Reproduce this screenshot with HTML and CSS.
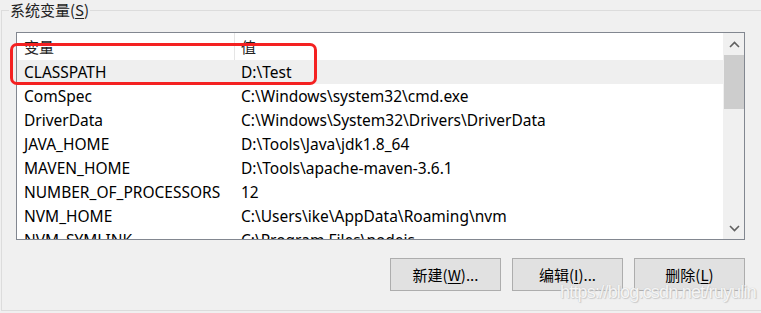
FILE: index.html
```html
<!DOCTYPE html>
<html lang="zh-CN">
<head>
<meta charset="utf-8">
<link rel="stylesheet" href="styles.css">
</head>
<body>
<div class="page">
  <div class="group">
    <div class="legend">系统变量(<u>S</u>)</div>
    <div class="listbox">
      <div class="list">
        <div class="head">
          <div class="hc">变量</div>
          <div class="hc2">值</div>
        </div>
        <div class="row sel"><div class="c1">CLASSPATH</div><div class="c2">D:\Test</div></div>
        <div class="row"><div class="c1">ComSpec</div><div class="c2">C:\Windows\system32\cmd.exe</div></div>
        <div class="row"><div class="c1">DriverData</div><div class="c2">C:\Windows\System32\Drivers\DriverData</div></div>
        <div class="row"><div class="c1">JAVA_HOME</div><div class="c2">D:\Tools\Java\jdk1.8_64</div></div>
        <div class="row"><div class="c1">MAVEN_HOME</div><div class="c2">D:\Tools\apache-maven-3.6.1</div></div>
        <div class="row"><div class="c1">NUMBER_OF_PROCESSORS</div><div class="c2">12</div></div>
        <div class="row"><div class="c1">NVM_HOME</div><div class="c2">C:\Users\ike\AppData\Roaming\nvm</div></div>
        <div class="row"><div class="c1">NVM_SYMLINK</div><div class="c2">C:\Program Files\nodejs</div></div>
      </div>
      <div class="scroll">
        <div class="arrow"><svg width="11" height="7" viewBox="0 0 11 7"><polyline points="1,6 5.5,1.5 10,6" fill="none" stroke="#606060" stroke-width="1.6"/></svg></div>
        <div class="thumb"></div>
        <div class="track"></div>
        <div class="arrow"><svg width="11" height="7" viewBox="0 0 11 7"><polyline points="1,1 5.5,5.5 10,1" fill="none" stroke="#606060" stroke-width="1.6"/></svg></div>
      </div>
    </div>
    <div class="buttons">
      <button class="btn">新建(<u>W</u>)...</button>
      <button class="btn">编辑(<u>I</u>)...</button>
      <button class="btn">删除(<u>L</u>)</button>
    </div>
    <div class="mark"></div>
    <div class="wm">https://blog.csdn.net/ruyulin</div>
  </div>
</div>
</body>
</html>
```
FILE: styles.css
```css
html, body {
  margin: 0;
  padding: 0;
  background: #f0f0f0;
  overflow: hidden;
}
body {
  width: 761px;
  height: 313px;
  font-family: "Noto Sans", "Noto Sans CJK SC", sans-serif;
  font-size: 15.5px;
  color: #000;
}
.page {
  width: 761px;
  height: 313px;
  overflow: hidden;
  padding: 10px 0 0 1px;
  box-sizing: border-box;
}
.group {
  position: relative;
  width: 800px;
  height: 299px;
  border: 1px solid #dcdcdc;
}
.legend {
  position: absolute;
  left: 7px;
  top: -11px;
  padding: 0 1px;
  background: #f0f0f0;
  line-height: 20px;
  font-family: "Noto Sans CJK SC", sans-serif;
  font-size: 15px;
  color: #222;
}
.legend u { text-underline-offset: 2px; }
.listbox {
  display: flex;
  margin: 21px 0 0 14px;
  width: 727px;
  height: 206px;
  border: 1px solid #828790;
  background: #fff;
  overflow: hidden;
}
.list {
  flex: 1;
  overflow: hidden;
}
.head {
  display: flex;
  height: 27px;
  align-items: center;
}
.row {
  display: flex;
  height: 24px;
  align-items: center;
  white-space: nowrap;
}
.row.sel { background: #efefef; }
.c1 {
  width: 217px;
  padding-left: 7px;
  flex: none;
}
.c2 { flex: 1; }
.hc, .hc2 {
  font-family: "Noto Sans CJK SC", sans-serif;
  font-size: 15px;
  height: 27px;
  line-height: 27px;
  color: #222;
}
.hc {
  width: 210px;
  padding-left: 7px;
  border-right: 1px solid #e5e5e5;
  flex: none;
}
.hc2 { padding-left: 6px; }
.scroll {
  width: 21px;
  display: flex;
  flex-direction: column;
  background: #f0f0f0;
  padding-left: 1px;
  box-sizing: border-box;
}
.arrow {
  height: 22px;
  display: flex;
  align-items: center;
  justify-content: center;
}
.thumb {
  height: 54px;
  background: #cdcdcd;
}
.track { flex: 1; }
.buttons {
  display: flex;
  gap: 11px;
  margin: 18px 0 0 388px;
}
.btn {
  width: 111px;
  height: 33px;
  background: #e1e1e1;
  border: 1px solid #adadad;
  font-family: "Noto Sans CJK SC", sans-serif;
  font-size: 15px;
  color: #000;
  padding: 0;
}
.btn u { text-underline-offset: 2px; }
.mark {
  position: absolute;
  left: 8px;
  top: 32px;
  width: 301px;
  height: 36px;
  border: 3px solid #f42121;
  border-radius: 7px;
}
.wm {
  position: absolute;
  left: 558px;
  top: 271px;
  white-space: nowrap;
  font-family: "Liberation Sans", sans-serif;
  font-size: 18px;
  letter-spacing: -0.8px;
  color: rgba(255,255,255,0.85);
  text-shadow: 0 0 1px #bbb, 1px 1px 1px #ccc;
}
```
